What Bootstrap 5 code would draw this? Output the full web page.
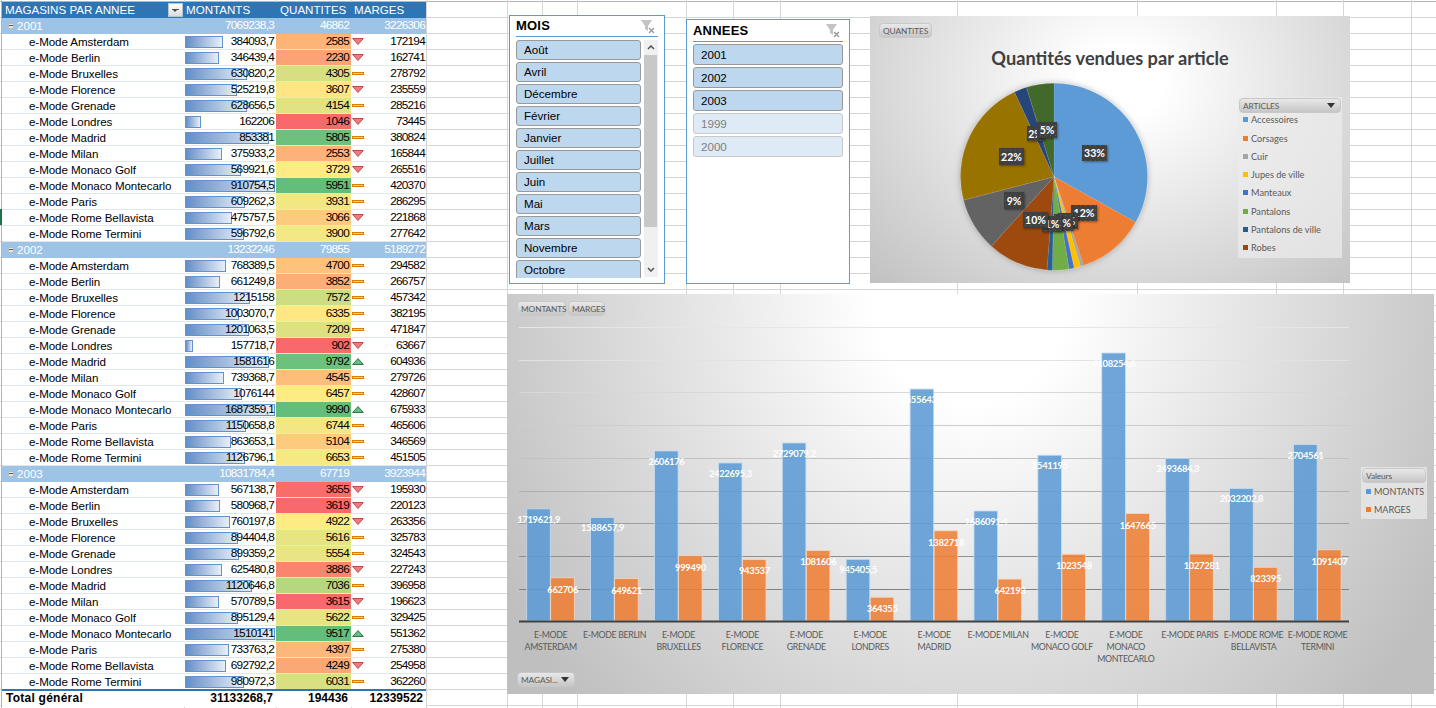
<!DOCTYPE html>
<html lang="fr">
<head>
  <meta charset="UTF-8" />
  <title>Magasins par année</title>
  <link href="https://cdn.jsdelivr.net/npm/bootstrap@5.3.0/dist/css/bootstrap.min.css" rel="stylesheet">
  <style>
    html, body { margin: 0; width: 1436px; height: 708px; overflow: hidden; background: #fff; }

    .sheet {
      position: relative;
      width: 1436px;
      height: 708px;
      overflow: hidden;
      padding: 2px 0 0 2px;
      font-family: "Liberation Sans", Arial, sans-serif;
      background-image: repeating-linear-gradient(180deg, transparent 0, transparent 1px, #d6d6d6 1px, #d6d6d6 2px, transparent 2px, transparent 16px);
    }
    .grid-cols { position: absolute; left: 0; top: 0; }
    .row-mark { position: absolute; left: 0; top: 209px; width: 2px; height: 16px; background: #217346; }

    /* tableau croisé */
    .pivot { position: relative; width: 424px; table-layout: fixed; border-collapse: separate; border-spacing: 0; background: #fff; font-size: 11.6px; color: #000; margin: 0; }
    .pivot td, .pivot th { height: 16px; padding: 0; line-height: 15px; white-space: nowrap; overflow: hidden; vertical-align: top; font-weight: 400; }
    .pivot .num { font-size: 11.8px; letter-spacing: -.75px; text-align: right; }
    .pivot tr.line td { border-bottom: 1px solid #dfe6ec; }
    .pivot tr.last-line td { border-bottom: 2px solid #2e75b6; }
    .pivot .head th { background: #2e75b6; color: #fff; font-size: 11.6px; }
    .pivot .head th.lbl { position: relative; padding-left: 3px; }
    .pivot .head th.col-mont { padding-left: 2px; }
    .pivot .head th.col-qte { padding-left: 4px; }
    .pivot .head th.col-marg { padding-left: 3px; }
    .filter-btn { position: absolute; right: 1px; top: 1px; width: 15px; height: 14px; background: linear-gradient(#fff, #dcdcdc); border: 1px solid #b8c4d0; }
    .filter-btn::before { content: ""; position: absolute; left: 3px; top: 5px; width: 7px; height: 1px; background: #555; }
    .filter-btn::after { content: ""; position: absolute; left: 4px; top: 6px; border: 2.5px solid transparent; border-top-color: #444; border-bottom: 0; }
    .year td { background: #9dc3e6; color: #fff; }
    .pivot .year td.lbl { padding-left: 15px; position: relative; }
    .minus-box { position: absolute; left: 6px; top: 5px; width: 6px; height: 6px; background: #e4e4e4; border: 1px solid #bbb; }
    .minus-box::after { content: ""; position: absolute; left: 0; top: 1px; width: 4px; height: 1px; background: #555; }
    .pivot td.store { padding-left: 27px; letter-spacing: -.08px; }
    .pivot td.mont-cell { position: relative; padding-right: 2px; }
    .mont-cell span { position: relative; }
    .data-bar { position: absolute; left: 1px; top: 2px; height: 12px; border: 1px solid #6393cf; background: linear-gradient(90deg, #638ec6, #e9eff8); }
    .pivot td.qte { padding-right: 2px; }
    .pivot td.marg-cell { position: relative; padding-right: 1px; }
    .marg-cell svg { position: absolute; left: 1px; top: 3px; }
    .pivot .total td { font-weight: 700; font-size: 12px; letter-spacing: .25px; }
    .pivot .total td.num { font-size: 12px; font-weight: 700; letter-spacing: 0; padding-right: 3px; }
    .pivot .total td.lbl { padding-left: 4px; }

    /* segments */
    .slicer { position: absolute; background: #fff; border: 1px solid #5b9bd5; padding: 0 6px; }
    .slicer-mois { left: 509px; top: 15px; width: 156px; height: 269px; }
    .slicer-annees { left: 686px; top: 19px; width: 164px; height: 265px; }
    .slicer-title { font-size: 13px; font-weight: 700; letter-spacing: .2px; border-bottom: 1px solid #5b9bd5; color: #000; padding-right: 2px; }
    .slicer-mois .slicer-title { height: 21px; line-height: 20px; }
    .slicer-annees .slicer-title { height: 22px; line-height: 22px; }
    .slicer-body { height: 241px; overflow: hidden; padding-top: 3px; }
    .slicer-items { width: 125px; }
    .slicer-annees .slicer-body { padding-top: 2px; }
    .slicer-annees .slicer-items { width: 150px; }
    .slicer-item { flex: none; height: 20px; background: #bdd7ee; border: 1px solid #999; border-radius: 3px; font-size: 11.6px; line-height: 18px; padding-left: 7px; color: #000; }
    .slicer-annees .slicer-item { height: 21px; line-height: 20px; }
    .slicer-item.off { background: #deeaf6; border-color: #c9c9c9; color: #808080; }
    .scroll-track { position: relative; width: 14px; height: 237px; margin-top: 0; background: #f0f0f0; }
    .scroll-thumb { position: absolute; left: 0; top: 15px; width: 13px; height: 172px; background: #c8c8c8; }
    .scroll-track svg { position: absolute; left: 3px; }

    /* graphiques */
    .chart { position: absolute; font-family: Lato, "Liberation Sans", sans-serif; color: #595959; }
    .chart svg.plot { position: absolute; left: 0; top: 0; }
    .chart-pie { left: 870px; top: 16px; width: 480px; height: 267px; background: radial-gradient(ellipse 75% 110% at 52% 25%, #fff 12%, #bfbfbf 100%); }
    .chart-bars { left: 507px; top: 294px; width: 927px; height: 400px; background: radial-gradient(ellipse 58% 150% at 50% 0, #fff 18%, #bfbfbf 100%); }
    .pie-title { position: absolute; left: 0; right: 0; top: 30px; text-align: center; font-size: 18.2px; font-weight: 700; color: #404040; line-height: 24px; }
    .field-btn { position: absolute; height: 15px; line-height: 14px; font-size: 8.3px; letter-spacing: -.1px; color: #595959; background: linear-gradient(#e8e8e8, #c6c6c6); border: 1px solid #c8c8c8; border-radius: 4px; padding: 0 3px; white-space: nowrap; }
    .field-btn .tri { position: absolute; top: 4px; right: 5px; border: 4px solid transparent; border-top: 5px solid #333; border-bottom: 0; }
    .chart-legend { position: absolute; background: rgba(235, 235, 235, .72); font-size: 9.2px; color: #595959; }
    .legend-pie { left: 368px; top: 81px; width: 104px; height: 161px; }
    .legend-bars { left: 854px; top: 173px; width: 66px; height: 52px; font-size: 9px; }
    .legend-row { position: absolute; left: 5px; height: 12px; line-height: 12px; white-space: nowrap; }
    .legend-row i { display: inline-block; width: 5px; height: 5px; margin-right: 3px; vertical-align: 1px; }
  </style>
</head>
<body>
  <div class="sheet">
    <svg class="grid-cols" width="1436" height="708" id="gridCols"></svg>
    <div class="row-mark"></div>

    <table class="pivot" id="pivot">
      <colgroup><col style="width:182px"><col style="width:92px"><col style="width:75px"><col style="width:75px"></colgroup>
      <thead>
        <tr class="head">
          <th class="lbl">MAGASINS PAR ANNEE<span class="filter-btn"></span></th>
          <th class="col-mont">MONTANTS</th>
          <th class="col-qte">QUANTITES</th>
          <th class="col-marg">MARGES</th>
        </tr>
      </thead>
      <tbody id="pivotBody"></tbody>
    </table>

    <div class="slicer slicer-mois">
      <div class="slicer-title d-flex justify-content-between">MOIS<svg class="mt-1" width="16" height="14" viewBox="0 0 16 14"><path d="M1 0h11L8 6v5L5 9V6z" fill="#c4c4c4"/><path d="M9 8l5 5M14 8l-5 5" stroke="#999" stroke-width="1.4"/></svg></div>
      <div class="d-flex justify-content-between slicer-body">
        <div class="slicer-items d-flex flex-column gap-0" id="monthList"></div>
        <div class="scroll-track">
          <div class="scroll-thumb"></div>
          <svg style="top:5px" width="8" height="5" viewBox="0 0 8 5"><path d="M1 4l3-3 3 3" fill="none" stroke="#555" stroke-width="1.5"/></svg>
          <svg style="top:227px" width="8" height="5" viewBox="0 0 8 5"><path d="M1 1l3 3 3-3" fill="none" stroke="#555" stroke-width="1.5"/></svg>
        </div>
      </div>
    </div>

    <div class="slicer slicer-annees">
      <div class="slicer-title d-flex justify-content-between">ANNEES<svg class="mt-1" width="16" height="14" viewBox="0 0 16 14"><path d="M1 0h11L8 6v5L5 9V6z" fill="#c4c4c4"/><path d="M9 8l5 5M14 8l-5 5" stroke="#999" stroke-width="1.4"/></svg></div>
      <div class="slicer-body">
        <div class="slicer-items d-flex flex-column" id="yearList"></div>
      </div>
    </div>

    <div class="chart chart-pie">
      <svg class="plot" id="pieSvg" width="480" height="267" viewBox="870 16 480 267"></svg>
      <div class="pie-title">Quantités vendues par article</div>
      <div class="field-btn" style="left:9px;top:7px">QUANTITES</div>
      <div class="chart-legend legend-pie" id="pieLegend">
        <div class="field-btn" style="left:1px;top:1px;width:102px">ARTICLES<span class="tri"></span></div>
      </div>
    </div>

    <div class="chart chart-bars">
      <svg class="plot" id="barSvg" width="927" height="400" viewBox="507 294 927 400"></svg>
      <div class="field-btn" style="left:10px;top:7px;width:49px">MONTANTS</div>
      <div class="field-btn" style="left:61px;top:7px;width:37px">MARGES</div>
      <div class="field-btn" style="left:10px;top:378px;width:58px">MAGASI...<span class="tri"></span></div>
      <div class="chart-legend legend-bars">
        <div class="field-btn" style="left:1px;top:1px;width:64px">Valeurs</div>
        <div class="legend-row" style="top:19px"><i style="background:#5b9bd5"></i>MONTANTS</div>
        <div class="legend-row" style="top:37px"><i style="background:#ed7d31"></i>MARGES</div>
      </div>
    </div>
  </div>

  <script src="https://cdn.jsdelivr.net/npm/bootstrap@5.3.0/dist/js/bootstrap.bundle.min.js"></script>
  <script>
    const stores = ['Amsterdam', 'Berlin', 'Bruxelles', 'Florence', 'Grenade', 'Londres', 'Madrid', 'Milan', 'Monaco Golf', 'Monaco Montecarlo', 'Paris', 'Rome Bellavista', 'Rome Termini'];

    // montant, quantité, icone (d = baisse, s = stable, u = hausse), marge
    const years = [
      { year: '2001', mont: '7069238,3', qte: '46862', marg: '3226306', rows: [
        ['384093,7', 2585, 'd', 172194], ['346439,4', 2230, 'd', 162741], ['630820,2', 4305, 's', 278792], ['525219,8', 3607, 'd', 235559],
        ['628656,5', 4154, 's', 285216], ['162206', 1046, 'd', 73445], ['853381', 5805, 's', 380824], ['375933,2', 2553, 'd', 165844],
        ['569921,6', 3729, 'd', 265516], ['910754,5', 5951, 's', 420370], ['609262,3', 3931, 's', 286295], ['475757,5', 3066, 'd', 221868], ['596792,6', 3900, 's', 277642]
      ]},
      { year: '2002', mont: '13232246', qte: '79855', marg: '5189272', rows: [
        ['768389,5', 4700, 's', 294582], ['661249,8', 3852, 's', 266757], ['1215158', 7572, 's', 457342], ['1003070,7', 6335, 's', 382195],
        ['1201063,5', 7209, 's', 471847], ['157718,7', 902, 'd', 63667], ['1581616', 9792, 'u', 604936], ['739368,7', 4545, 's', 279726],
        ['1076144', 6457, 's', 428607], ['1687359,1', 9990, 'u', 675933], ['1150658,8', 6744, 's', 465606], ['863653,1', 5104, 's', 346569], ['1126796,1', 6653, 's', 451505]
      ]},
      { year: '2003', mont: '10831784,4', qte: '67719', marg: '3923944', rows: [
        ['567138,7', 3655, 'd', 195930], ['580968,7', 3619, 'd', 220123], ['760197,8', 4922, 'd', 263356], ['894404,8', 5616, 's', 325783],
        ['899359,2', 5554, 's', 324543], ['625480,8', 3886, 'd', 227243], ['1120646,8', 7036, 's', 396958], ['570789,5', 3615, 'd', 196623],
        ['895129,4', 5622, 's', 329425], ['1510141', 9517, 'u', 551362], ['733763,2', 4397, 's', 275380], ['692792,2', 4249, 'd', 254958], ['980972,3', 6031, 's', 362260]
      ]}
    ];

    const icons = {
      d: '<svg width="12" height="9" viewBox="0 0 12 9"><path d="M.7 1.5h10.6L6 7.5z" fill="#f4777a" stroke="#b5504f"/></svg>',
      s: '<svg width="12" height="9" viewBox="0 0 12 9"><rect x=".5" y="3.5" width="11" height="2" fill="#ffd27a" stroke="#e07b00"/></svg>',
      u: '<svg width="12" height="9" viewBox="0 0 12 9"><path d="M.7 7.5h10.6L6 1.5z" fill="#63be7b" stroke="#2e7d46"/></svg>'
    };

    function mix(a, b, t) {
      return a.map((v, i) => Math.round(v + (b[i] - v) * t));
    }

    // échelle à trois couleurs : min, médiane, max
    function scaleColor(v, sorted) {
      const min = sorted[0], mid = sorted[6], max = sorted[12];
      const rgb = v <= mid
        ? mix([248, 105, 107], [255, 235, 132], (v - min) / (mid - min))
        : mix([255, 235, 132], [99, 190, 123], (v - mid) / (max - mid));
      return `rgb(${rgb.join(',')})`;
    }

    let html = '';
    years.forEach((y, yi) => {
      const maxMont = Math.max(...y.rows.map(r => parseFloat(r[0].replace(',', '.'))));
      const sorted = y.rows.map(r => r[1]).sort((a, b) => a - b);
      html += `<tr class="year"><td class="lbl"><span class="minus-box"></span>${y.year}</td><td class="num mont-cell">${y.mont}</td><td class="num qte">${y.qte}</td><td class="num marg-cell">${y.marg}</td></tr>`;
      y.rows.forEach((r, i) => {
        const w = 90 * parseFloat(r[0].replace(',', '.')) / maxMont;
        const cls = (yi === 2 && i === 12) ? 'last-line' : 'line';
        html += `<tr class="${cls}"><td class="store">e-Mode ${stores[i]}</td>` +
          `<td class="num mont-cell"><div class="data-bar" style="width:${w.toFixed(1)}px"></div><span>${r[0]}</span></td>` +
          `<td class="num qte" style="background:${scaleColor(r[1], sorted)}">${r[1]}</td>` +
          `<td class="num marg-cell">${icons[r[2]]}${r[3]}</td></tr>`;
      });
    });
    html += '<tr class="total"><td class="lbl">Total général</td><td class="num mont-cell">31133268,7</td><td class="num qte">194436</td><td class="num marg-cell">12339522</td></tr>';
    document.getElementById('pivotBody').innerHTML = html;

    // lignes verticales de la feuille
    document.getElementById('gridCols').innerHTML =
      `<line x1="1.5" y1="0" x2="1.5" y2="708" stroke="#b5b5b5"/><line x1="0" y1="1.5" x2="1436" y2="1.5" stroke="#b5b5b5"/>` +
      [184, 276, 351, 426, 507, 542, 577, 686, 733, 780, 957, 1137, 1276, 1343, 1411]
        .map(x => `<line x1="${x + .5}" y1="0" x2="${x + .5}" y2="708" stroke="#d6d6d6"/>`).join('');

    // segments
    document.getElementById('monthList').innerHTML = ['Août', 'Avril', 'Décembre', 'Février', 'Janvier', 'Juillet', 'Juin', 'Mai', 'Mars', 'Novembre', 'Octobre']
      .map(m => `<div class="slicer-item" style="margin-bottom:2px">${m}</div>`).join('');
    document.getElementById('yearList').innerHTML = [['2001', 0], ['2002', 0], ['2003', 0], ['1999', 1], ['2000', 1]]
      .map(a => `<div class="slicer-item${a[1] ? ' off' : ''}" style="margin-bottom:2px">${a[0]}</div>`).join('');

    // camembert
    const cx = 1054, cy = 176.7, rad = 93.5;
    const slices = [
      [119.2, '#5b9bd5'], [161.6, '#ed7d31'], [163.5, '#a5a5a5'], [167.6, '#ffc000'], [170.8, '#4472c4'], [181, '#70ad47'],
      [184.3, '#255e91'], [222, '#9e480e'], [255.5, '#636363'], [335, '#997300'], [342.9, '#264478'], [360, '#43682b']
    ];
    function polar(a) {
      const t = (a - 90) * Math.PI / 180;
      return `${(cx + rad * Math.cos(t)).toFixed(2)} ${(cy + rad * Math.sin(t)).toFixed(2)}`;
    }
    let pie = `<defs><pattern id="dots" width="5" height="5" patternUnits="userSpaceOnUse"><rect width="5" height="5" fill="#3f3f3f"/><rect width="1" height="1" fill="#5c5c5c"/></pattern>
      <filter id="pieShadow" x="-10%" y="-10%" width="120%" height="120%"><feDropShadow dx="0" dy="0" stdDeviation="3" flood-opacity=".28"/></filter>
      <filter id="boxShadow" x="-20%" y="-20%" width="140%" height="150%"><feDropShadow dx="1" dy="1" stdDeviation="1" flood-opacity=".4"/></filter></defs><g filter="url(#pieShadow)">`;
    let from = 0;
    slices.forEach(s => {
      pie += `<path d="M${cx} ${cy}L${polar(from)}A${rad} ${rad} 0 ${s[0] - from > 180 ? 1 : 0} 1 ${polar(s[0])}Z" fill="${s[1]}" stroke="rgba(255,255,255,.25)" stroke-width=".4"/>`;
      from = s[0];
    });
    pie += '</g>';
    // étiquettes [x, y, w, h, texte] dans l'ordre d'empilement
    [[1082, 145, 25, 16, '33%'], [1071, 205, 26, 16, '12%'], [1058, 213, 20, 16, '1%'], [1054, 214, 19, 17, '3%'], [1042, 216, 20, 16, '1%'],
     [1023, 212, 25, 16, '10%'], [1004, 192, 20, 17, '9%'], [999, 148, 25, 17, '22%'], [1027, 126, 17, 15, '2%'], [1037, 122, 20, 16, '5%']]
      .forEach(l => {
        pie += `<rect x="${l[0]}" y="${l[1]}" width="${l[2]}" height="${l[3]}" fill="url(#dots)" filter="url(#boxShadow)"/>` +
          `<text x="${l[0] + l[2] / 2}" y="${l[1] + l[3] / 2 + 4}" text-anchor="middle" font-size="10.5" font-weight="700" fill="#fff">${l[4]}</text>`;
      });
    document.getElementById('pieSvg').innerHTML = pie;

    const legendY = [97, 116, 134, 152, 170, 189, 207, 225];
    document.getElementById('pieLegend').insertAdjacentHTML('beforeend',
      [['Accessoires', '#5b9bd5'], ['Corsages', '#ed7d31'], ['Cuir', '#a5a5a5'], ['Jupes de ville', '#ffc000'], ['Manteaux', '#4472c4'], ['Pantalons', '#70ad47'], ['Pantalons de ville', '#255e91'], ['Robes', '#9e480e']]
        .map((a, i) => `<div class="legend-row" style="top:${legendY[i] - 81 + 1}px"><i style="background:${a[1]}"></i>${a[0]}</div>`).join(''));

    // histogramme
    const cats = [
      [['E-MODE', 'AMSTERDAM'], '1719621,9', '662706'], [['E-MODE BERLIN'], '1588657,9', '649621'], [['E-MODE', 'BRUXELLES'], '2606176', '999490'],
      [['E-MODE', 'FLORENCE'], '2422695,3', '943537'], [['E-MODE', 'GRENADE'], '2729079,2', '1081606'], [['E-MODE', 'LONDRES'], '945405,5', '364355'],
      [['E-MODE', 'MADRID'], '3555643,8', '1382718'], [['E-MODE MILAN'], '1686091,4', '642193'], [['E-MODE', 'MONACO GOLF'], '2541195', '1023548'],
      [['E-MODE', 'MONACO', 'MONTECARLO'], '4108254,6', '1647665'], [['E-MODE PARIS'], '2493684,3', '1027281'], [['E-MODE ROME', 'BELLAVISTA'], '2032202,8', '823395'],
      [['E-MODE ROME', 'TERMINI'], '2704561', '1091407']
    ];
    const axisY = 621, perUnit = 268 / 4108254.6;
    let bars = '';
    [[327, '#e6e6e6'], [360, '#e2e2e2'], [392, '#d8d8d8'], [425, '#cdcdcd'], [458, '#c2c2c2'], [491, '#b0b0b0'], [523, '#a0a0a0'], [556, '#8f8f8f'], [589, '#808080']]
      .forEach(g => { bars += `<line x1="519" x2="1349" y1="${g[0] + .5}" y2="${g[0] + .5}" stroke="${g[1]}"/>`; });
    cats.forEach((c, i) => {
      const x = 526.7 + 63.9 * i;
      const hM = parseFloat(c[1].replace(',', '.')) * perUnit, hO = parseFloat(c[2].replace(',', '.')) * perUnit;
      bars += `<rect x="${x}" y="${axisY - hM}" width="23.6" height="${hM}" fill="#5b9bd5" fill-opacity=".88" stroke="#c6dcf0" stroke-width=".8"/>`;
      bars += `<rect x="${x + 24}" y="${axisY - hO}" width="23.6" height="${hO}" fill="#ed7d31" fill-opacity=".86" stroke="#f6d7c2" stroke-width=".8"/>`;
      bars += `<text x="${x + 12}" y="${axisY - hM + 14}" text-anchor="middle" font-size="9.4" letter-spacing="-.3" font-weight="700" fill="#fff">${c[1]}</text>`;
      bars += `<text x="${x + 36}" y="${axisY - hO + 15}" text-anchor="middle" font-size="9.4" letter-spacing="-.3" font-weight="700" fill="#fff">${c[2]}</text>`;
      c[0].forEach((t, k) => {
        bars += `<text x="${x + 24}" y="${637.5 + 12 * k}" text-anchor="middle" font-size="8.8" letter-spacing="-.35" fill="#595959">${t}</text>`;
      });
    });
    bars += `<rect x="519" y="620.5" width="830" height="2" fill="#404040"/>`;
    document.getElementById('barSvg').innerHTML = bars;
  </script>
</body>
</html>
